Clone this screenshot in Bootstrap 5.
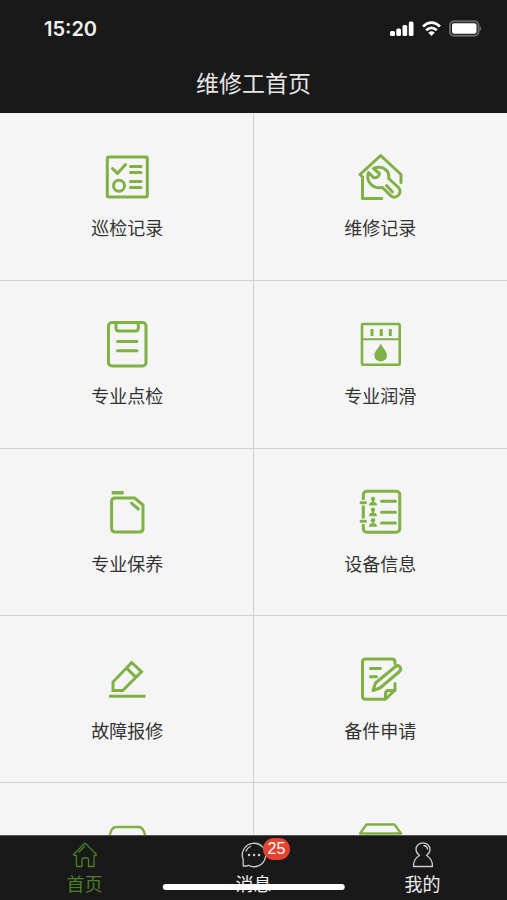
<!DOCTYPE html>
<html lang="zh-CN">
<head>
<meta charset="utf-8">
<meta name="viewport" content="width=device-width, initial-scale=1">
<title>维修工首页</title>
<link href="https://cdn.jsdelivr.net/npm/bootstrap@5.3.0/dist/css/bootstrap.min.css" rel="stylesheet">
<style>
  body { font-family: "Liberation Sans", "Noto Sans CJK SC", sans-serif; background: #f5f5f5; }
  .dark-bar { background: #191919; color: #f0f0f0; }
  .status-row { height: 57px; padding: 0 25px 0 44px; }
  .clock { font: 600 20px/24px Inter, sans-serif; }
  .page-title { font-size: 23px; line-height: 54px; padding-bottom: 2px; font-weight: 400; color: #e6e6e6; }
  .tile { min-height: 168px; padding-top: 40px; gap: 16px; color: #333; font-size: 18px; line-height: 24px;
          border-bottom: 1px solid #d0d0d0; }
  .tile:nth-child(n+5) { min-height: 167px; }
  .tile:nth-child(odd) { border-right: 1px solid #d0d0d0; padding-left: 2px; }
  .tile svg { width: 48px; height: 48px; stroke: #7fb145; fill: none; stroke-width: 3;
              stroke-linecap: round; stroke-linejoin: round; }
  .tile svg .solid { fill: #7fb145; stroke: none; }
  .tab-bar { border-top: 1px solid #555; }
  .tab-link { padding: 5px 0 3px; gap: 4px; color: #f0f0f0; font-size: 18px; line-height: 24px; }
  .tab-link.current { color: #4b8025; }
  .tab-link svg { display: block; width: 28px; height: 28px; fill: none; stroke: #ccc; stroke-width: 1.3;
                  stroke-linejoin: round; stroke-linecap: round; }
  .tab-link.current svg { stroke: #4b8025; }
  .count { left: 23px; top: -3px; padding: 0 5px; background: #e5432d; color: #fff; font-size: 16px; line-height: 22px; }
  .home-line { width: 36%; height: 6px; bottom: 10px; background: #fff; }
</style>
<script src="https://cdn.jsdelivr.net/npm/bootstrap@5.3.0/dist/js/bootstrap.bundle.min.js"></script>
</head>
<body class="vh-100 d-flex flex-column overflow-hidden">
<header class="dark-bar flex-shrink-0">
  <div class="status-row d-flex align-items-center justify-content-between">
    <span class="clock">15:20</span>
    <div class="d-flex align-items-center gap-2" aria-hidden="true">
      <svg width="24" height="16" fill="#fff"><rect x="0" y="10" width="5" height="5" rx="1.5"/><rect x="6.300" y="7.500" width="4.700" height="7.500" rx="1.500"/><rect x="12.500" y="4" width="4.700" height="11" rx="1.500"/><rect x="18.800" y="0.500" width="4.700" height="14.500" rx="1.500"/></svg>
      <svg width="19" height="16" fill="none" stroke="#fff" stroke-width="2.800"><path d="M1 5.500Q9.500-2.200 18 5.500M4.200 9.300Q9.500 4.500 14.800 9.300"/><path d="M6.300 11.700Q9.500 9 12.700 11.700L9.500 15Z" fill="#fff" stroke="none"/></svg>
      <svg width="33" height="17"><rect x="1" y="1.200" width="28.500" height="14.500" rx="4" fill="#191919" stroke="#666" stroke-width="2"/><rect x="3" y="3.200" width="24.500" height="10.500" rx="2" fill="#fff"/><path d="M30.500 5.500Q34 8.500 30.500 11.500Z" fill="#666"/></svg>
    </div>
  </div>
  <h1 class="page-title text-center m-0">维修工首页</h1>
</header>

<main class="flex-fill overflow-hidden">
  <div class="row row-cols-2 g-0">
    <a href="#" class="tile col d-flex flex-column align-items-center text-decoration-none">
      <svg viewBox="0 0 48 48"><rect x="4.300" y="4" width="40" height="40" rx="1.500"/><path d="M9.500 15.500l5 5 8-9M27.500 13.500H38M27.500 19.500H38M27.500 28.500H38M27.500 34.500H38"/><circle cx="16" cy="32.700" r="5.500"/></svg>
      <span>巡检记录</span></a>
    <a href="#" class="tile col d-flex flex-column align-items-center text-decoration-none">
      <svg viewBox="0 0 48 48"><path d="M25.700 45.500H6.500V24L4 21.500 24.700 2.500 45 21.500V29.500"/><path d="M17.500 15.500C26 12 34 17 32.700 25.500L42.500 34.500C47 39.500 40.500 47 35 43L26.500 34.500C17 36.500 9.500 29 12.500 19.500L17.500 24.500Q22.500 25.500 23.500 20.500Z"/><path d="M30.500 32.500L36.500 39"/></svg>
      <span>维修记录</span></a>
    <a href="#" class="tile col d-flex flex-column align-items-center text-decoration-none">
      <svg viewBox="0 0 48 48"><rect x="5.500" y="1.500" width="37.500" height="43.500" rx="3.500"/><path d="M13 2V7q0 3 3 3H32.300q3 0 3-3V2M14.500 20.500H34M14.500 29.700H34"/></svg>
      <span>专业点检</span></a>
    <a href="#" class="tile col d-flex flex-column align-items-center text-decoration-none">
      <svg viewBox="0 0 48 48"><g stroke-width="2.600"><rect x="6" y="3" width="37.700" height="40.700" rx="1"/><path d="M6 18.300H43.700" stroke-width="2"/></g><path class="solid" d="M14.500 8h3v7h-3zM23.700 8h3v7h-3zM32.800 8h3v7h-3zM24.700 22.300C26 26.500 31 30 31 34.500A6.300 6 0 0 1 18.400 34.500C18.400 30 23.500 26.500 24.700 22.300Z"/></svg>
      <span>专业润滑</span></a>
    <a href="#" class="tile col d-flex flex-column align-items-center text-decoration-none">
      <svg viewBox="0 0 48 48"><path d="M12.300 9H31.500L40 16V39.300q0 3.700-3.700 3.700H12.300q-3.700 0-3.700-3.700V12.700Q8.600 9 12.300 9ZM28.500 14.200L35.300 20"/><rect class="solid" x="8.700" y="2" width="12" height="3.500" rx="0.500"/></svg>
      <span>专业保养</span></a>
    <a href="#" class="tile col d-flex flex-column align-items-center text-decoration-none">
      <svg viewBox="0 0 48 48"><rect x="7.300" y="2.300" width="36.500" height="41" rx="3.500"/><path d="M7.300 11V16.500M7.300 29.500V35" stroke="#f5f5f5" stroke-width="4" stroke-linecap="butt"/><path d="M5 13.700H9.500M5 32.200H9.500M25.500 12.300H39.500M25.500 23.200H39.500M25.500 34H39.500"/><g class="solid"><circle cx="17" cy="10" r="2.200"/><path d="M16 11h2v2q3 0 3 3.500h-8q0-3.500 3-3.500z"/><circle cx="17" cy="20.700" r="2.200"/><path d="M16 21.700h2v2q3 0 3 3.500h-8q0-3.500 3-3.500z"/><circle cx="17" cy="31.300" r="2.200"/><path d="M16 32.300h2v2q3 0 3 3.500h-8q0-3.500 3-3.500z"/></g></svg>
      <span>设备信息</span></a>
    <a href="#" class="tile col d-flex flex-column align-items-center text-decoration-none">
      <svg viewBox="0 0 48 48"><g stroke-linejoin="miter" stroke-linecap="butt"><path d="M28.700 6.500L38.500 15.700 19.700 34.500H10V26ZM23 11.700L33 21.300M6 40.300H42.500"/></g></svg>
      <span>故障报修</span></a>
    <a href="#" class="tile col d-flex flex-column align-items-center text-decoration-none">
      <svg viewBox="0 0 48 48"><path d="M39 7.500V6q0-3-3-3H9.500q-3 0-3 3V40.300q0 3 3 3H29.500L39 34V27.500M29.500 43V38q0-3.500 3.500-3.500H39M14.500 12.500H24.500M14.500 20.700H20.500"/><path d="M17 34.500L19.500 27 39.500 10.500C43 8 46.500 12.500 43.500 15.500L24 32Z"/></svg>
      <span>备件申请</span></a>
    <a href="#" class="tile col d-flex flex-column align-items-center" aria-label="更多">
      <svg viewBox="0 0 48 48"><path stroke-width="2.300" d="M6.500 14Q8 4 13 4H36Q40.500 4 42.500 14"/></svg></a>
    <a href="#" class="tile col d-flex flex-column align-items-center" aria-label="更多">
      <svg viewBox="0 0 48 48"><path stroke-width="2.300" d="M4 10.500L10.500 1.500H38.500L45 10.500Z"/></svg></a>
  </div>
</main>

<nav class="tab-bar dark-bar position-relative flex-shrink-0">
  <div class="row row-cols-3 g-0">
    <a href="#" class="tab-link current col d-flex flex-column align-items-center text-decoration-none" aria-current="page">
      <svg viewBox="0 0 28 28"><path d="M5 14.500H3.500Q2 14.500 3 13L13 3Q14 2 15 3L25 13Q26 14.500 24.500 14.500H23V25.500H17.500V18.500Q17.500 17 16 17H12.500Q11 17 11 18.500V25.500H5.500V14.500M8 11L13.500 5.500"/></svg>
      <span>首页</span></a>
    <a href="#" class="tab-link col d-flex flex-column align-items-center text-decoration-none">
      <span class="position-relative"><svg viewBox="0 0 28 28"><path d="M3.200 25V18.500A11.700 11.700 0 1 1 8.300 24.200Q7.500 25 6.500 25ZM6 10Q7.500 6.500 10.500 5.500"/><path d="M9 14h.1M14 14h.1M19 14h.1" stroke-width="2.400"/></svg><span class="count position-absolute rounded-pill">25</span></span>
      <span>消息</span></a>
    <a href="#" class="tab-link col d-flex flex-column align-items-center text-decoration-none">
      <svg viewBox="0 0 28 28"><path d="M10.500 14.500Q7 12 7 8.500A7 6.700 0 0 1 21 8.500Q21 12 17.500 14.500Q23.500 17.500 23.500 25.500H4.500Q4.500 17.500 10.500 14.500ZM15 4.500Q18 5 18.500 8"/></svg>
      <span>我的</span></a>
  </div>
  <div class="home-line position-absolute start-50 translate-middle-x rounded-pill"></div>
</nav>
</body>
</html>
